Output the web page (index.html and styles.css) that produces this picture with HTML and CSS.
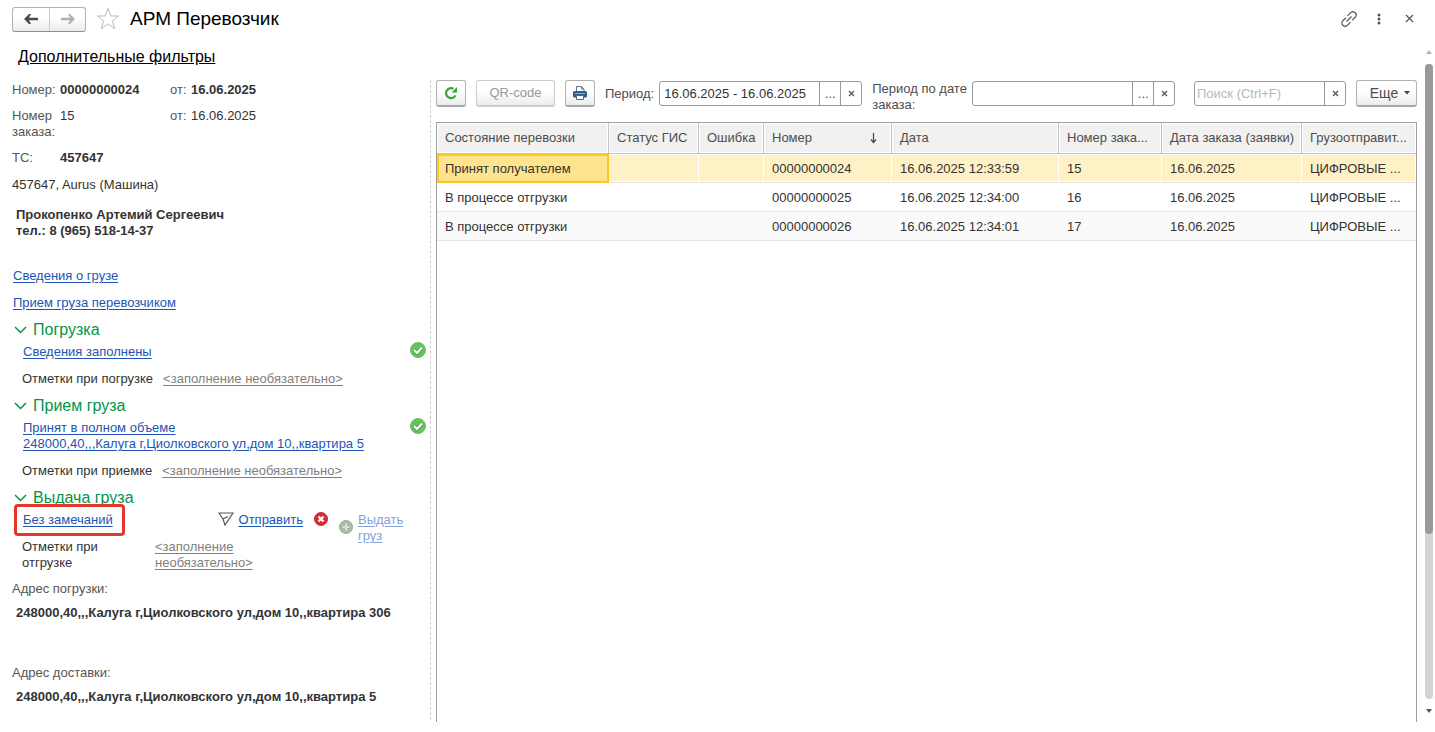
FILE: index.html
```html
<!DOCTYPE html>
<html lang="ru">
  <head>
    <meta charset="utf-8">
    <title>АРМ Перевозчик</title>
    <meta name="viewport" content="width=device-width,initial-scale=1">
    <link rel="stylesheet" href="styles.css">
  </head>
  <body>
    <div class="page">
      <header class="titlebar">
        <div class="nav-buttons">
          <button type="button" aria-label="Назад">
            <svg width="14" height="10" viewBox="0 0 14 10"><path d="M0 5 5 0h2L5 3.700h9v2.600H5L7 10H5z" fill="#4a4a4a"/></svg>
          </button>
          <button type="button" aria-label="Вперед" disabled>
            <svg width="14" height="10" viewBox="0 0 14 10"><path d="M14 5 9 0H7l2 3.700H0v2.600h9L7 10h2z" fill="#b0b0b0"/></svg>
          </button>
        </div>
        <button type="button" class="icon-button star" aria-label="Избранное">
          <svg width="24" height="24" viewBox="0 0 24 24"><path d="M12 1.500 14.700 9h8L16.300 13.800 18.700 21.500 12 16.900 5.300 21.500 7.700 13.800 1.300 9h8z" fill="#fff" stroke="#b3bcc6"/></svg>
        </button>
        <h1>АРМ Перевозчик</h1>
        <div class="window-buttons">
          <button type="button" class="icon-button" aria-label="Получить ссылку">
            <svg width="16" height="16" viewBox="0 0 16 16" fill="none" stroke="#555" stroke-width="1.200"><path d="M6.500 4.800 9.500 1.800a3.200 3.200 0 0 1 4.700 4.500L11 9.400M9.500 11.200l-3 3a3.200 3.200 0 0 1-4.700-4.500L5 6.600M5.500 10.500l5-5"/></svg>
          </button>
          <button type="button" class="icon-button" aria-label="Меню">
            <svg width="16" height="16" viewBox="0 0 16 16" fill="#555"><circle cx="8" cy="4" r="1.500"/><circle cx="8" cy="8" r="1.500"/><circle cx="8" cy="12" r="1.500"/></svg>
          </button>
          <button type="button" class="icon-button" aria-label="Закрыть">
            <svg width="16" height="16" viewBox="0 0 16 16"><path d="m5 4 7 7m0-7-7 7" stroke="#555" stroke-width="1.200"/></svg>
          </button>
        </div>
      </header>

      <div class="content">
        <main class="workspace">
          <a href="#" class="filters-link">Дополнительные фильтры</a>

          <div class="columns">
            <section class="details">
              <div class="field">
                <span class="label">Номер:</span>
                <b class="number">00000000024</b>
                <span class="label from">от:</span>
                <b>16.06.2025</b>
              </div>
              <div class="field">
                <span class="label">Номер заказа:</span>
                <span class="number">15</span>
                <span class="label from">от:</span>
                <span>16.06.2025</span>
              </div>
              <div class="field">
                <span class="label">ТС:</span>
                <b class="number">457647</b>
              </div>
              <div class="vehicle">457647, Aurus (Машина)</div>
              <div class="driver">Прокопенко Артемий Сергеевич<br>тел.: 8 (965) 518-14-37</div>

              <div class="links">
                <a href="#">Сведения о грузе</a>
                <a href="#">Прием груза перевозчиком</a>
              </div>

              <div class="group">
                <h2><svg width="14" height="8" viewBox="0 0 14 8"><path d="m2 1 5.500 5.500L13 1"/></svg>Погрузка</h2>
                <div class="status">
                  <a href="#">Сведения заполнены</a>
                  <svg class="status-icon" width="16" height="16" viewBox="0 0 16 16"><circle cx="8" cy="8" r="7.500" fill="#63c45b" stroke="#70b96a"/><path d="m4 8 3 3 5-5.500" fill="none" stroke="#4c9a49" stroke-width="3.800"/><path d="m4 8 3 3 5-5.500" fill="none" stroke="#fff" stroke-width="2.200"/></svg>
                </div>
                <div class="notes">
                  <span>Отметки при погрузке</span>
                  <a href="#" class="optional">&lt;заполнение необязательно&gt;</a>
                </div>
              </div>

              <div class="group">
                <h2><svg width="14" height="8" viewBox="0 0 14 8"><path d="m2 1 5.500 5.500L13 1"/></svg>Прием груза</h2>
                <div class="status">
                  <a href="#">Принят в полном объеме<br>248000,40,,,Калуга г,Циолковского ул,дом 10,,квартира 5</a>
                  <svg class="status-icon" width="16" height="16" viewBox="0 0 16 16"><circle cx="8" cy="8" r="7.500" fill="#63c45b" stroke="#70b96a"/><path d="m4 8 3 3 5-5.500" fill="none" stroke="#4c9a49" stroke-width="3.800"/><path d="m4 8 3 3 5-5.500" fill="none" stroke="#fff" stroke-width="2.200"/></svg>
                </div>
                <div class="notes">
                  <span>Отметки при приемке</span>
                  <a href="#" class="optional">&lt;заполнение необязательно&gt;</a>
                </div>
              </div>

              <div class="group">
                <h2><svg width="14" height="8" viewBox="0 0 14 8"><path d="m2 1 5.500 5.500L13 1"/></svg>Выдача груза</h2>
                <div class="status issue">
                  <a href="#" class="marked">Без замечаний</a>
                  <div class="actions">
                    <svg width="16" height="14" viewBox="0 0 16 14" fill="none" stroke="#555" stroke-width="1.200"><path d="M1 1h14L7 13 5 7zM5 7l5-2.500"/></svg>
                    <a href="#">Отправить</a>
                    <button type="button" class="icon-button" aria-label="Отменить">
                      <svg width="14" height="14" viewBox="0 0 14 14"><circle cx="7" cy="7" r="6.500" fill="#d92b31" stroke="#b9353a"/><path d="m4.500 4.500 5 5m0-5-5 5" stroke="#fff" stroke-width="2.200"/></svg>
                    </button>
                    <svg class="plus" width="14" height="14" viewBox="0 0 14 14"><circle cx="7" cy="7" r="6.500" fill="#a9bba9" stroke="#9bac9c"/><path d="M7 3.500v7M3.500 7h7" stroke="#d5e3d4" stroke-width="2"/></svg>
                    <a href="#" class="disabled">Выдать груз</a>
                  </div>
                </div>
                <div class="notes narrow">
                  <span>Отметки при отгрузке</span>
                  <a href="#" class="optional">&lt;заполнение необязательно&gt;</a>
                </div>
              </div>

              <div class="address">
                <span class="label">Адрес погрузки:</span>
                <b>248000,40,,,Калуга г,Циолковского ул,дом 10,,квартира 306</b>
              </div>
              <div class="address">
                <span class="label">Адрес доставки:</span>
                <b>248000,40,,,Калуга г,Циолковского ул,дом 10,,квартира 5</b>
              </div>
            </section>

            <section class="list">
              <div class="toolbar">
                <button type="button" class="button square" aria-label="Обновить">
                  <svg width="14" height="14" viewBox="0 0 14 14"><path d="M11.500 9.500A5 5 0 1 1 9.500 2.800" fill="none" stroke="#36a935" stroke-width="2.200"/><path d="M13 1v5.500H7.500z" fill="#36a935"/></svg>
                </button>
                <button type="button" class="button qr" disabled>QR-code</button>
                <button type="button" class="button square" aria-label="Печать">
                  <svg width="16" height="16" viewBox="0 0 16 16"><path d="M4.500 6.500v-5h5L12 4v2.500" fill="#fff" stroke="#63788c"/><path d="M9.500 1.500V4H12" fill="none" stroke="#63788c"/><rect x="1" y="6" width="14" height="6.500" rx="1.500" fill="#2f5f8a"/><path d="M3 8.500h10" stroke="#8fb0cc"/><path d="M4.500 10.500h7v4h-7z" fill="#fff" stroke="#4a6a87"/></svg>
                </button>
                <label for="period">Период:</label>
                <div class="input-box">
                  <input type="text" id="period" value="16.06.2025 - 16.06.2025">
                  <button type="button" aria-label="Выбрать период">...</button>
                  <button type="button" aria-label="Очистить период"><svg width="7" height="7" viewBox="0 0 7 7"><path d="m1 1 5 5m0-5-5 5"/></svg></button>
                </div>
                <label for="orderPeriod" class="order-label">Период по дате заказа:</label>
                <div class="input-box">
                  <input type="text" id="orderPeriod">
                  <button type="button" aria-label="Выбрать период заказа">...</button>
                  <button type="button" aria-label="Очистить период заказа"><svg width="7" height="7" viewBox="0 0 7 7"><path d="m1 1 5 5m0-5-5 5"/></svg></button>
                </div>
                <div class="input-box search">
                  <input type="text" aria-label="Поиск" placeholder="Поиск (Ctrl+F)">
                  <button type="button" aria-label="Очистить поиск"><svg width="7" height="7" viewBox="0 0 7 7"><path d="m1 1 5 5m0-5-5 5"/></svg></button>
                </div>
                <button type="button" class="button more">Еще <svg width="6" height="4" viewBox="0 0 6 4"><path d="M0 0h6L3 3.500z" fill="#444"/></svg></button>
              </div>

              <div class="table-box">
                <table>
                  <colgroup>
                    <col class="col-state">
                    <col class="col-gis">
                    <col class="col-error">
                    <col class="col-number">
                    <col class="col-date">
                    <col class="col-order">
                    <col class="col-order-date">
                    <col class="col-sender">
                  </colgroup>
                  <thead>
                    <tr>
                      <th>Состояние перевозки</th>
                      <th>Статус ГИС</th>
                      <th>Ошибка</th>
                      <th><span class="sorted">Номер <svg width="7" height="12" viewBox="0 0 7 12"><path d="M3.500 1v9M1 7.500l2.500 3 2.500-3" fill="none" stroke="#444" stroke-width="1.200"/></svg></span></th>
                      <th>Дата</th>
                      <th>Номер зака...</th>
                      <th>Дата заказа (заявки)</th>
                      <th>Грузоотправит...</th>
                    </tr>
                  </thead>
                  <tbody>
                    <tr class="selected">
                      <td class="current">Принят получателем</td>
                      <td></td>
                      <td></td>
                      <td>00000000024</td>
                      <td>16.06.2025 12:33:59</td>
                      <td>15</td>
                      <td>16.06.2025</td>
                      <td>ЦИФРОВЫЕ ...</td>
                    </tr>
                    <tr>
                      <td>В процессе отгрузки</td>
                      <td></td>
                      <td></td>
                      <td>00000000025</td>
                      <td>16.06.2025 12:34:00</td>
                      <td>16</td>
                      <td>16.06.2025</td>
                      <td>ЦИФРОВЫЕ ...</td>
                    </tr>
                    <tr>
                      <td>В процессе отгрузки</td>
                      <td></td>
                      <td></td>
                      <td>00000000026</td>
                      <td>16.06.2025 12:34:01</td>
                      <td>17</td>
                      <td>16.06.2025</td>
                      <td>ЦИФРОВЫЕ ...</td>
                    </tr>
                  </tbody>
                </table>
              </div>
            </section>
          </div>
        </main>

        <div class="scrollbar" aria-hidden="true">
          <svg width="6" height="4" viewBox="0 0 6 4"><path d="M0 4h6L3 0z" fill="#b5b5b5"/></svg>
          <div class="track"><div class="thumb"></div></div>
          <svg width="6" height="4" viewBox="0 0 6 4"><path d="M0 0h6L3 4z" fill="#555"/></svg>
        </div>
      </div>
    </div>
  </body>
</html>
```
FILE: styles.css
```css
* {
  box-sizing: border-box;
}

body {
  margin: 0;
  font-family: "Liberation Sans", Arial, sans-serif;
  font-size: 13px;
  line-height: 16px;
  color: #333;
  background: #fff;
}

button,
input {
  font: inherit;
  color: inherit;
}

button {
  padding: 0;
}

svg {
  flex: none;
  display: block;
}

a {
  color: #1c55b4;
  text-underline-offset: 2px;
}

.page {
  display: flex;
  flex-direction: column;
  min-height: 100vh;
}

/* title bar */

.titlebar {
  display: flex;
  align-items: center;
  height: 38px;
  padding: 0 18px 0 12px;
}

.titlebar h1 {
  margin: 0;
  font-size: 19px;
  line-height: 24px;
  font-weight: normal;
  color: #000;
}

.nav-buttons {
  display: flex;
  height: 25px;
  border: 1px solid #b3b3b3;
  border-bottom-color: #8f8f8f;
  border-radius: 3px;
  background: linear-gradient(#fff 40%, #ececec);
}

.nav-buttons button {
  display: flex;
  align-items: center;
  justify-content: center;
  width: 36px;
  border: 0;
  background: none;
}

.nav-buttons button + button {
  border-left: 1px solid #ccc;
}

.icon-button {
  border: 0;
  background: none;
}

.star {
  margin: 0 10px;
}

.window-buttons {
  display: flex;
  gap: 14px;
  margin-left: auto;
}

/* page body */

.content {
  flex: 1;
  display: flex;
}

.workspace {
  flex: 1;
  min-width: 0;
  display: flex;
  flex-direction: column;
  padding: 9px 8px 10px 12px;
}

.filters-link {
  align-self: flex-start;
  margin: 0 0 13px 6px;
  font-size: 16px;
  line-height: 20px;
  color: #000;
  text-underline-offset: 1px;
}

.columns {
  flex: 1;
  display: flex;
}

.details {
  flex: none;
  width: 419px;
  margin-right: 5px;
  margin-bottom: 2px;
  padding-top: 2px;
  border-right: 1px dashed #ccc;
}

.label {
  color: #555;
}

.field {
  display: flex;
  margin-bottom: 10px;
}

.field .label {
  width: 48px;
}

.field .number {
  width: 110px;
}

.field .from {
  width: 21px;
}

.driver {
  margin: 14px 0 0 4px;
  font-weight: bold;
}

.vehicle {
  margin-top: 11px;
}

.links {
  display: flex;
  flex-direction: column;
  align-items: flex-start;
  gap: 11px;
  margin: 29px 0 11px 1px;
}

.group {
  margin-bottom: 11px;
}

.group h2 {
  display: flex;
  align-items: center;
  gap: 6px;
  margin: 0 0 6px 1px;
  font-size: 16px;
  line-height: 16px;
  font-weight: normal;
  color: #009646;
}

.group h2 svg {
  fill: none;
  stroke: #009646;
  stroke-width: 1.5;
}

.status {
  display: flex;
  justify-content: space-between;
  padding: 0 4px 0 11px;
}

.status-icon {
  margin-top: -2px;
}

.notes {
  display: flex;
  gap: 10px;
  margin-top: 11px;
  padding-left: 10px;
}

.notes.narrow {
  width: 260px;
  gap: 32px;
}

.notes.narrow span {
  flex: none;
  width: 101px;
}

.optional {
  color: #808080;
}

/* the issue link takes two lines and reaches beside the notes below */
.issue {
  height: 16px;
}

.marked {
  position: relative;
}

.marked::after {
  content: "";
  position: absolute;
  top: -8px;
  right: -12px;
  bottom: -8px;
  left: -9px;
  border: 3px solid #e5372c;
  border-radius: 4px;
}

.actions {
  display: flex;
  align-items: flex-start;
  gap: 5px;
}

.actions .icon-button {
  margin: 0 6px;
}

.actions .plus {
  margin-top: 8px;
}

.actions .disabled {
  width: 68px;
  color: #82a3dc;
}

.address {
  display: flex;
  flex-direction: column;
  gap: 8px;
  margin-bottom: 44px;
}

.group + .address {
  margin-top: -1px;
}

.address:last-child {
  margin-bottom: 0;
}

.address b {
  padding-left: 4px;
}

/* toolbar */

.list {
  flex: 1;
  min-width: 0;
  display: flex;
  flex-direction: column;
}

.toolbar {
  display: flex;
  align-items: center;
  height: 27px;
  margin-bottom: 15px;
  color: #4d4d4d;
}

.button {
  flex: none;
  display: flex;
  align-items: center;
  justify-content: center;
  height: 27px;
  margin-right: 10px;
  border: 1px solid #b3b3b3;
  border-bottom: 2px solid #a6a6a6;
  border-radius: 3px;
  background: linear-gradient(#fff 40%, #ececec);
}

.button.square {
  width: 30px;
}

.button.qr {
  width: 79px;
  color: #999;
  border-color: #ccc;
}

.button.more {
  gap: 6px;
  width: 61px;
  margin-right: 0;
  padding-left: 7px;
  font-size: 14px;
}

.toolbar label {
  margin-right: 5px;
}

.order-label {
  width: 95px;
  margin-left: 10px;
  padding-top: 6px;
}

.input-box {
  display: flex;
  width: 203px;
  height: 25px;
  border: 1px solid #999;
  border-radius: 3px;
  background: #fff;
}

.input-box input {
  flex: 1;
  min-width: 0;
  padding: 0 4px;
  border: 0;
  background: none;
  color: #333;
}

.input-box input::placeholder {
  color: #b8b8b8;
}

.input-box button {
  display: flex;
  align-items: center;
  justify-content: center;
  width: 21px;
  border: 0;
  border-left: 1px solid #999;
  background: none;
}

.input-box button svg {
  stroke: #555;
  stroke-width: 1.3;
}

.input-box.search {
  width: 152px;
  margin: 0 10px 0 auto;
}

.input-box.search input {
  padding: 0 2px;
}

/* table */

.table-box {
  flex: 1;
  border: 1px solid #a0a0a0;
  border-bottom: 0;
}

table {
  width: 100%;
  table-layout: fixed;
  border-collapse: separate;
  border-spacing: 0;
}

.col-state { width: 172px; }
.col-gis { width: 90px; }
.col-error { width: 65px; }
.col-number { width: 128px; }
.col-date { width: 167px; }
.col-order { width: 103px; }
.col-order-date { width: 140px; }

th,
td {
  padding: 1px 2px 0 8px;
  font-weight: normal;
  text-align: left;
  white-space: nowrap;
  overflow: hidden;
  text-overflow: ellipsis;
}

th {
  height: 31px;
  padding-top: 0;
  color: #4d4d4d;
  background: #f1f1f1;
  border-right: 1px solid #c4c4c4;
  border-bottom: 1px solid #c4c4c4;
  box-shadow: inset 0 0 0 1px #fff;
}

td {
  height: 29px;
  border-bottom: 1px solid #e4e4e4;
}

th:last-child {
  border-right: 0;
}

tbody tr:nth-child(odd) {
  background: #fafafa;
}

tbody .selected td {
  background: #fff1c6;
  border-right: 1px solid #fff;
  box-shadow: inset 0 1px #fff, inset 0 -1px #fff;
}

tbody .selected .current {
  padding: 0 0 0 6px;
  background: #ffe48d;
  border: 2px solid #f9c922;
  box-shadow: none;
}

.sorted {
  display: flex;
  align-items: center;
  justify-content: space-between;
  padding-right: 12px;
}

/* scrollbar */

.scrollbar {
  display: flex;
  flex-direction: column;
  align-items: center;
  gap: 10px;
  width: 8px;
  margin-right: 2px;
  padding: 12px 0 19px;
}

.track {
  flex: 1;
  width: 8px;
  border-radius: 4px;
  background: #d5d5d5;
}

.thumb {
  height: 74%;
  border-radius: 4px;
  background: #999;
}
```
